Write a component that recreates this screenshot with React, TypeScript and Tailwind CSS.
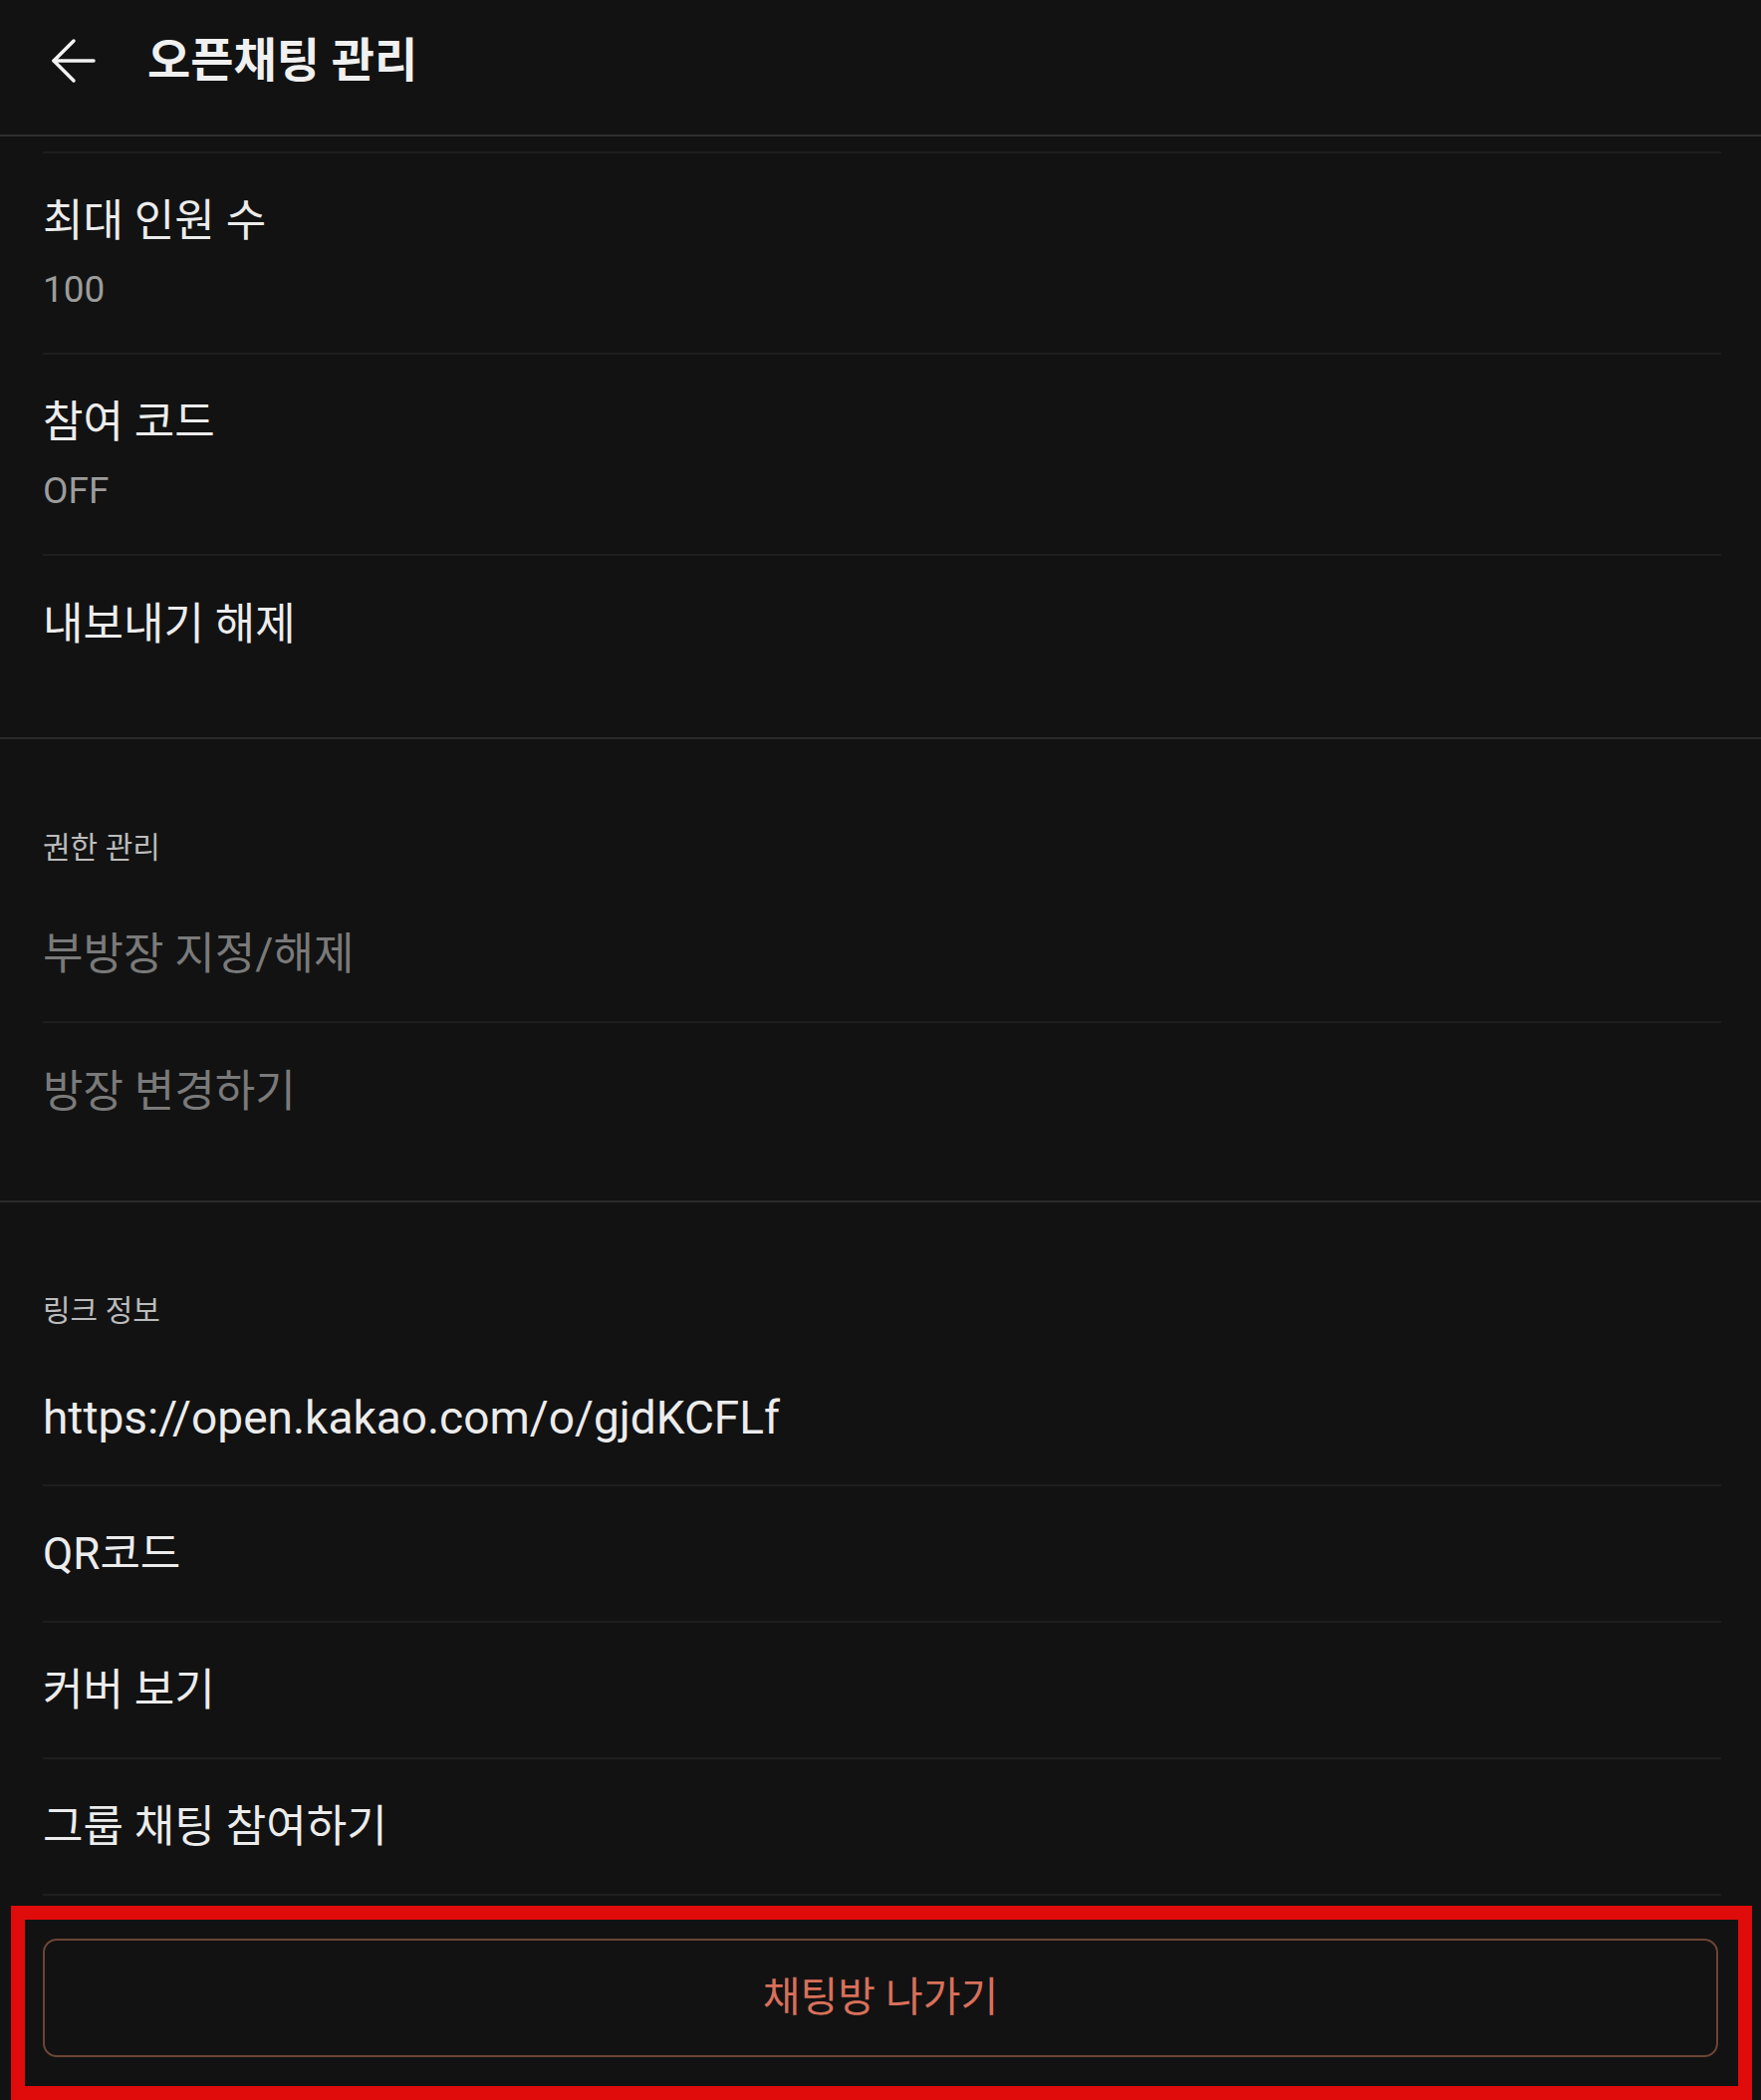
import React from "react";

const font = { fontFamily: 'Roboto, "Noto Sans CJK KR", sans-serif' };

function Row({ title, sub, last, muted, big }: { title: string; sub?: string; last?: boolean; muted?: boolean; big?: boolean }) {
  if (sub) {
    return (
      <div className={`h-[202px] pt-[40px] ${last ? "" : "border-b-2 border-[#1e1e1e]"}`}>
        <div className="text-[44px] leading-[56px] text-[#ececec]">{title}</div>
        <div className="mt-[17px] text-[37px] leading-[48px] text-[#9c9c9c]">{sub}</div>
      </div>
    );
  }
  return (
    <div className={`flex h-[137px] items-center ${last ? "" : "border-b-2 border-[#1e1e1e]"}`}>
      <span className={`${big ? "text-[46px]" : "text-[44px]"} leading-[56px] ${muted ? "text-[#7a7a7a]" : "text-[#ececec]"}`}>
        {title}
      </span>
    </div>
  );
}

function SectionHeader({ label }: { label: string }) {
  return (
    <div className="h-[148px] pt-[94px] text-[30px] leading-[30px] text-[#bcbcbc]">{label}</div>
  );
}

export default function App() {
  return (
    <div className="min-h-[2108px] w-full bg-[#121212]" style={font}>
      {/* header */}
      <div className="flex h-[137px] items-center border-b-2 border-[#2e2e2e] pb-[14px]">
        <svg className="ml-[50px] h-[48px] w-[48px]" viewBox="0 0 48 48" fill="none" stroke="#f2f2f2" strokeWidth="3.5" strokeLinecap="round" strokeLinejoin="round">
          <path d="M4 24 H44" />
          <path d="M24 4 L4 24 L24 44" />
        </svg>
        <h1 className="ml-[50px] text-[47px] font-bold leading-[56px] text-[#f0f0f0]">오픈채팅 관리</h1>
      </div>

      {/* room settings */}
      <div className="border-b-2 border-[#2a2a2a] pl-[43px] pr-[40px] pt-[15px] pb-[45px]">
        <div className="border-t-2 border-[#1e1e1e]">
          <Row title="최대 인원 수" sub="100" />
          <Row title="참여 코드" sub="OFF" />
          <Row title="내보내기 해제" last />
        </div>
      </div>

      {/* permissions */}
      <div className="border-b-2 border-[#2a2a2a] pl-[43px] pr-[40px] pb-[41px]">
        <SectionHeader label="권한 관리" />
        <Row title="부방장 지정/해제" muted />
        <Row title="방장 변경하기" muted last />
      </div>

      {/* link info */}
      <div className="pl-[43px] pr-[40px]">
        <SectionHeader label="링크 정보" />
        <Row title="https://open.kakao.com/o/gjdKCFLf" big />
        <Row title="QR코드" />
        <Row title="커버 보기" />
        <Row title="그룹 채팅 참여하기" />
      </div>

      {/* leave button */}
      <div className="relative px-[43px] pt-[43px] pb-[43px]">
        <button className="flex h-[119px] w-full items-center justify-center rounded-[14px] border-2 border-[#6b4536] text-[41px] text-[#d8705a]">
          채팅방 나가기
        </button>
        <div className="pointer-events-none absolute top-[10px] right-[9px] bottom-0 left-[11px] border-[14px] border-[#e00b0b]" />
      </div>
    </div>
  );
}
